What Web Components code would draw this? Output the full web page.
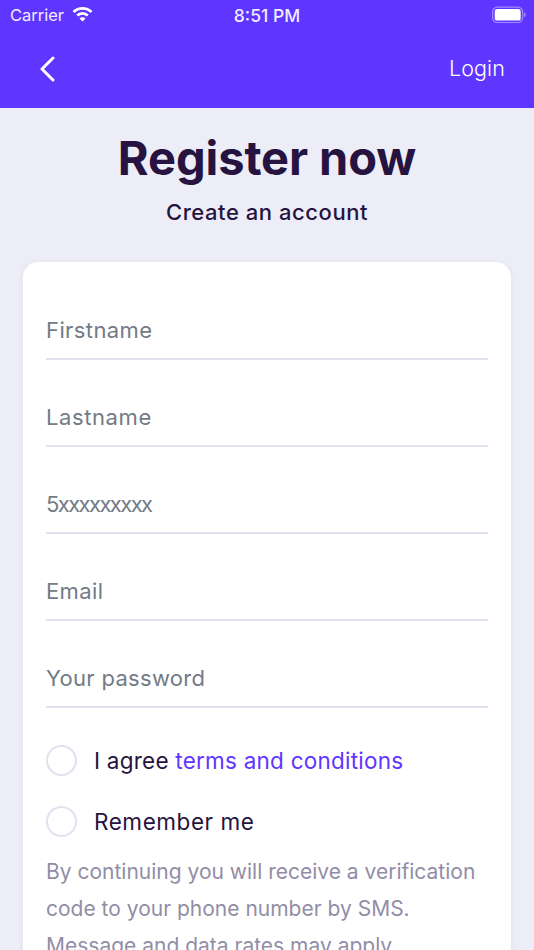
<!DOCTYPE html>
<html lang="en">
<head>
<meta charset="utf-8">
<title>Register</title>
<style>
	html, body { margin: 0; padding: 0; height: 950px; overflow: hidden; background: #ecedf6; font-family: "Inter", "Liberation Sans", sans-serif; }
</style>
</head>
<body>
<register-screen>
	<top-bar slot="bar" action="Login"></top-bar>
	<page-heading slot="heading" title="Register now" subtitle="Create an account"></page-heading>
	<form-card slot="card">
		<text-field placeholder="Firstname"></text-field>
		<text-field placeholder="Lastname" style="--track:.6px"></text-field>
		<text-field placeholder="5xxxxxxxxx" style="--track:-1.6px"></text-field>
		<text-field placeholder="Email"></text-field>
		<text-field placeholder="Your password" style="--track:.3px"></text-field>
		<check-row style="margin-top:37px">I agree <a>terms and conditions</a></check-row>
		<check-row style="margin-top:30px;--track:.55px">Remember me</check-row>
		<sms-note>By continuing you will receive a verification code to your phone number by SMS. Message and data rates may apply.</sms-note>
	</form-card>
</register-screen>

<script>
//////////////////////////////////////////// Helpers ///////////////////////////////////////////

function define(name, html, init) {
	customElements.define(name, class extends HTMLElement {
		constructor(...args) {
			super(...args);
			this._shadow = this.attachShadow({ mode: 'open' });
			this._shadow.innerHTML = html;
		}
		connectedCallback() {
			if (init) init(this, this._shadow);
		}
	});
}

///////////////////////////////////////// Screen layout ////////////////////////////////////////

define("register-screen", `
<style>
	:host { display: flex; flex-direction: column; width: 534px; height: 950px; overflow: hidden; }
	.body { flex: 1; padding: 0 23px; min-height: 0; }
</style>
<slot name="bar"></slot>
<div class="body">
	<slot name="heading"></slot>
	<slot name="card"></slot>
</div>
`);

//////////////////////////////////////// Top bar /////////////////////////////////////////

define("top-bar", `
<style>
	:host { display: block; height: 108px; background: #5f36ff; color: #fff; }
	.status { display: flex; align-items: center; height: 30px; padding: 0 10px; position: relative; font-size: 16.5px; color: #f1edff; }
	.wifi { margin-left: 8px; margin-top: -2px; }
	.time { position: absolute; left: 0; right: 0; text-align: center; font-weight: 500; font-size: 17.500px; }
	.battery { margin-left: auto; margin-right: -2px; margin-top: -1px; }
	.nav { display: flex; align-items: center; justify-content: space-between; height: 76px; padding: 0 29px 0 38px; }
	.back { margin-top: 2px; }
	.login { font-size: 21.500px; font-weight: 300; letter-spacing: .1px; }
</style>
<div class="status">
	<span class="carrier">Carrier</span>
	<svg class="wifi" width="21" height="16" viewBox="0 0 21 16">
		<path d="M1.6 6.1a12.6 12.6 0 0 1 17.8 0" fill="none" stroke="#fff" stroke-width="2.8"/>
		<path d="M5.2 9.6a7.6 7.6 0 0 1 10.6 0" fill="none" stroke="#fff" stroke-width="2.8"/>
		<path d="M10.5 15.6l-3-3.2a4.2 4.2 0 0 1 6 0z" fill="#fff"/>
	</svg>
	<span class="time">8:51 PM</span>
	<svg class="battery" width="36" height="18" viewBox="0 0 36 18">
		<rect x="2.6" y="1.1" width="30" height="15.400" rx="4.800" fill="none" stroke="#a08bff" stroke-width="1.2"/>
		<rect x="4.7" y="3.100" width="26" height="11.400" rx="2.600" fill="#fff"/>
		<path d="M34 6.300c1.200.4 1.700 1.300 1.700 2.500s-.5 2.100-1.700 2.500z" fill="#a08bff"/>
	</svg>
</div>
<div class="nav">
	<svg class="back" width="18" height="26" viewBox="0 0 18 26">
		<path d="M15 2L4 13l11 11" fill="none" stroke="#fff" stroke-width="3" stroke-linecap="round" stroke-linejoin="round"/>
	</svg>
	<span class="login"></span>
</div>
`, (el, root) => {
	root.querySelector(".login").textContent = el.getAttribute("action");
});

///////////////////////////////////////// Heading //////////////////////////////////////////

define("page-heading", `
<style>
	:host { display: block; text-align: center; color: #26133f; height: 154px; }
	h1 { margin: 0; padding-top: 21px; font-size: 47px; line-height: 58px; font-weight: 700; letter-spacing: -.1px; }
	p { margin: 0; padding-top: 11px; font-size: 22px; line-height: 28px; font-weight: 500; letter-spacing: .55px; }
</style>
<h1></h1>
<p></p>
`, (el, root) => {
	root.querySelector("h1").textContent = el.getAttribute("title");
	root.querySelector("p").textContent = el.getAttribute("subtitle");
});

////////////////////////////////////////// Card ////////////////////////////////////////////

define("form-card", `
<style>
	:host { display: block; background: #fff; border-radius: 15px; padding: 11px 23px 0; height: 760px; box-shadow: 0 1px 6px rgba(95, 80, 170, .07); }
</style>
<slot></slot>
`);

define("text-field", `
<style>
	:host { display: flex; align-items: center; height: 85px; border-bottom: 2px solid #e2e1f0; color: #737b86; font-size: 22px; }
	span { padding-top: 29px; letter-spacing: var(--track, .4px); }
</style>
<span></span>
`, (el, root) => {
	root.querySelector("span").textContent = el.getAttribute("placeholder");
});

define("check-row", `
<style>
	:host { display: flex; align-items: center; gap: 17px; height: 31px; color: #26133f; font-size: 22.500px; letter-spacing: var(--track, .23px); }
	.box { width: 27px; height: 27px; border: 2px solid #e2e1f0; border-radius: 50%; flex: none; background: #fff; }
	::slotted(a) { color: #5f36ff; }
</style>
<span class="box"></span>
<span class="text"><slot></slot></span>
`);

define("sms-note", `
<style>
	:host { display: block; margin-top: 16px; color: #928da6; font-size: 21px; line-height: 37px; }
</style>
<slot></slot>
`);
</script>
</body>
</html>
